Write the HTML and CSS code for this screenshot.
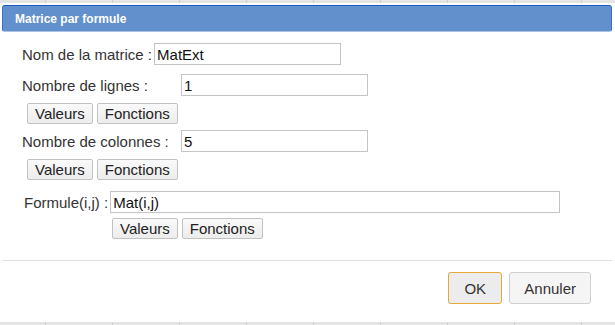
FILE: index.html
```html
<!DOCTYPE html>
<html lang="fr">

<head>
    <meta charset="UTF-8">
    <meta name="viewport" content="width=device-width, initial-scale=1.0">
    <title>Matrice par formule</title>
    <link rel="stylesheet" href="styles.css">
</head>

<body>
    <div class="dialog">
        <div class="dialog-title">Matrice par formule</div>

        <div class="form">
            <div class="row row-name">
                <label>Nom de la matrice :</label>
                <input class="field field-short" type="text" value="MatExt">
            </div>

            <div class="row row-size">
                <label class="wide-label">Nombre de lignes :</label>
                <input class="field field-short" type="text" value="1">
            </div>
            <div class="tools tools-size">
                <button class="tool">Valeurs</button>
                <button class="tool">Fonctions</button>
            </div>

            <div class="row row-size2">
                <label class="wide-label">Nombre de colonnes :</label>
                <input class="field field-short" type="text" value="5">
            </div>
            <div class="tools tools-size">
                <button class="tool">Valeurs</button>
                <button class="tool">Fonctions</button>
            </div>

            <div class="row row-formula">
                <label>Formule(i,j) :</label>
                <input class="field field-long" type="text" value="Mat(i,j)">
            </div>
            <div class="tools tools-formula">
                <button class="tool">Valeurs</button>
                <button class="tool">Fonctions</button>
            </div>
        </div>

        <div class="footer">
            <button class="action action-ok">OK</button>
            <button class="action">Annuler</button>
        </div>
    </div>
</body>

</html>
```

FILE: styles.css
```css
* {
    margin: 0px;
    padding: 0px;
    box-sizing: border-box;
}

body {
    font-family: "Liberation Sans", Arial, sans-serif;
    font-size: 15px;
    color: #333;
    background-color: #e4e4e4;
    background-image: repeating-linear-gradient(90deg, transparent 0px, transparent 45px, #cfcfcf 45px, #cfcfcf 46px, transparent 46px, transparent 67px);
    padding: 3px 0px;
    height: 325px;
}

.dialog {
    background-color: white;
    height: 319px;
    padding: 2px 3px 0px 2px;
}

.dialog-title {
    height: 27px;
    line-height: 26px;
    background-color: #6290cc;
    border: 1px solid #3a6fcf;
    border-top-color: #2259c8;
    border-bottom-color: #a9c2e6;
    border-radius: 3px;
    color: white;
    font-size: 12px;
    font-weight: bold;
    padding-left: 12px;
}

.form {
    padding-left: 20px;
}

.row {
    display: flex;
    align-items: center;
    height: 22px;
}

.row label {
    margin-right: 2px;
}

.row-name {
    margin-top: 11px;
}

.row-size {
    margin-top: 9px;
}

.row-size2 {
    margin-top: 6px;
}

.row-formula {
    margin-top: 11px;
    padding-left: 2px;
}

.wide-label {
    width: 157px;
}

.field {
    height: 22px;
    border: 1px solid #c4c4c4;
    font-family: "Liberation Sans", Arial, sans-serif;
    font-size: 15px;
    color: #111;
    padding: 0px 2px;
    outline: none;
}

.field-short {
    width: 187px;
}

.field-long {
    width: 450px;
}

.tools {
    display: flex;
    gap: 4px;
    height: 21px;
}

.tools-size {
    margin-top: 7px;
    padding-left: 5px;
}

.tools-formula {
    margin-top: 5px;
    padding-left: 90px;
}

.tool {
    height: 21px;
    padding: 0px 7px;
    border: 1px solid #c2c2c2;
    border-radius: 2px;
    background: linear-gradient(#fafafa, #ececec);
    font-family: "Liberation Sans", Arial, sans-serif;
    font-size: 15px;
    color: #222;
}

.footer {
    margin-top: 21px;
    border-top: 1px solid #dedede;
    display: flex;
    justify-content: flex-end;
    gap: 7px;
    padding: 11px 21px 0px 0px;
}

.action {
    height: 32px;
    padding: 0px 14px;
    border: 1px solid #cfcfcf;
    border-radius: 3px;
    background-color: #f5f5f5;
    font-family: "Liberation Sans", Arial, sans-serif;
    font-size: 15px;
    color: #333;
}

.action-ok {
    width: 54px;
    background-color: #ececec;
    border-color: #e8a838;
}
```
